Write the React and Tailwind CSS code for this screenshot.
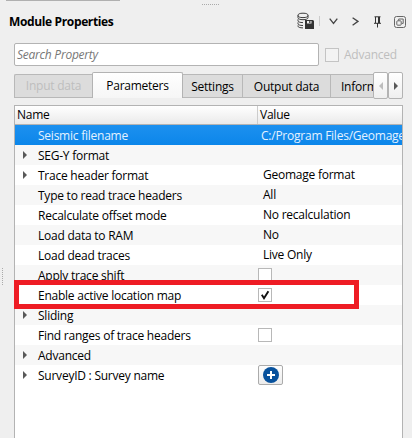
const TABS = [
  { label: 'Settings', className: 'w-[60px]', text: 'tracking-[-0.02em]' },
  { label: 'Output data', className: 'w-[88px]', text: 'tracking-[-0.02em]' },
  { label: 'Information', className: 'w-[55px] justify-start pl-[10px]', text: 'tracking-[-0.02em]' },
];

const ROWS = [
  { name: 'Seismic filename', value: 'C:/Program Files/Geomage', selected: true },
  { name: 'SEG-Y format', expandable: true },
  { name: 'Trace header format', value: 'Geomage format', expandable: true },
  { name: 'Type to read trace headers', value: 'All' },
  { name: 'Recalculate offset mode', value: 'No recalculation' },
  { name: 'Load data to RAM', value: 'No' },
  { name: 'Load dead traces', value: 'Live Only' },
  { name: 'Apply trace shift', checkbox: true },
  { name: 'Enable active location map', checkbox: true, checked: true },
  { name: 'Sliding', expandable: true },
  { name: 'Find ranges of trace headers', checkbox: true },
  { name: 'Advanced', expandable: true },
  { name: 'SurveyID : Survey name', expandable: true, add: true },
];

function DatabaseSaveIcon() {
  return (
    <svg width="18" height="18" viewBox="0 0 18 18" fill="none" stroke="#3c3c3c">
      <ellipse cx="6" cy="3.4" rx="5" ry="2.2" />
      <path d="M1 3.4v2.3c0 1.2 2 2 5 2s5-.8 5-2V3.4M1 7.3v1.5c0 1.1 2 1.8 5 1.8M1 10.4v1.4c0 1 2 1.7 5 1.7M1 13.4v.8c0 1 2 1.7 5 1.7" />
      <path d="M8 8h8l1 1v8H8z" fill="#333" stroke="none" />
      <path d="M10 9h4.5v2.5H10z" fill="#eee" stroke="none" />
      <path d="M12.2 9h1.2v2h-1.2z" fill="#333" stroke="none" />
    </svg>
  );
}

function PinIcon() {
  return (
    <svg width="9" height="12" viewBox="0 0 9 12" fill="none" stroke="#333">
      <path d="M1.5 .8h6M2.5 1v6M4.5 7v4.5M1 7.3h7" />
      <path d="M6 1v6" strokeWidth="2" />
    </svg>
  );
}

function FloatIcon() {
  return (
    <svg width="12" height="12" viewBox="0 0 12 12" fill="none" stroke="#666">
      <rect x=".5" y=".5" width="11" height="11" rx="2" />
      <path d="M4.7 4.5V3h4.5v4.4H7.8" />
      <rect x="2.8" y="4.8" width="4.4" height="4.4" rx=".8" />
    </svg>
  );
}

function Expander() {
  return (
    <svg width="4" height="8" viewBox="0 0 4 8" fill="#595959">
      <path d="M0 0l4 4-4 4z" />
    </svg>
  );
}

function Checkbox({ checked, faded }) {
  return (
    <span className={`block h-[14px] w-[14px] shrink-0 border ${faded ? 'border-[#c4c4c4] bg-[#f3f3f3]' : 'border-[#b8b8b8] bg-white'}`}>
      {checked && (
        <svg width="12" height="12" viewBox="0 0 12 12" fill="none" stroke="#111" strokeWidth="1.9">
          <path d="M2.8 5.8L5 9.2 9.4 2.2" />
        </svg>
      )}
    </span>
  );
}

function AddButton() {
  return (
    <span className="flex h-5 w-[25px] items-center justify-center rounded-[2px] border border-[#ababab] bg-gradient-to-b from-[#fdfdfd] to-[#ececec]">
      <svg width="16" height="16" viewBox="0 0 16 16">
        <circle cx="8" cy="8" r="8" fill="#07519c" />
        <path d="M8 4v8M4 8h8" stroke="#fff" strokeWidth="2" />
      </svg>
    </span>
  );
}

function Row({ row, index }) {
  const background = row.selected
    ? 'bg-gradient-to-b from-[#1c90ef] to-[#0b86ea] text-[#e4f2ff]'
    : index % 2 ? 'bg-[#f7f7f7]' : 'bg-white';
  return (
    <div className={`flex h-5 items-center ${background}`}>
      <div className="flex w-[243px] shrink-0 items-center">
        <span className="w-[23px] shrink-0 pl-2">{row.expandable && <Expander />}</span>
        <span className="pt-[2px]">{row.name}</span>
      </div>
      {row.value && <span className={row.selected ? 'pl-[3px] pt-[2px]' : 'pl-[5px]'}>{row.value}</span>}
      {row.checkbox && <Checkbox checked={row.checked} />}
      {row.add && <AddButton />}
    </div>
  );
}

export default function App() {
  return (
    <div className="relative flex h-[438px] w-[412px] flex-col overflow-hidden whitespace-nowrap bg-[#efefef] font-['Open_Sans','Noto_Sans',sans-serif] text-[12px] leading-[16px] tracking-[-0.02em] text-black">
      {/* edge of the panel above and the splitter handles */}
      <div className="absolute left-[6px] top-0 h-px w-[114px] bg-[#b0b0b0]" />
      <div className="absolute left-[202px] top-1 w-[17px] border-t border-dotted border-[#aaa]" />
      <div className="absolute left-[2px] top-[268px] h-[17px] border-l border-dotted border-[#aaa]" />

      <div className="flex h-[43px] shrink-0 items-start pl-[9px] pt-3">
        <h1 className="w-[288px] shrink-0 pt-[2px] font-bold tracking-[-0.03em]">Module Properties</h1>
        <DatabaseSaveIcon />
        <span className="ml-1 mt-1 h-[10px] w-px bg-[#ccc]" />
        <svg className="ml-[9px] mt-[6px]" width="9" height="7" viewBox="0 0 9 7" fill="none" stroke="#444" strokeWidth="1.3">
          <path d="M.7 .7l3.8 4.8L8.3 .7" />
        </svg>
        <svg className="ml-[14px] mt-[5px]" width="7" height="9" viewBox="0 0 7 9" fill="none" stroke="#444" strokeWidth="1.3">
          <path d="M.6 .7L6 4.4.6 8.2" />
        </svg>
        <span className="ml-[14px] mt-1"><PinIcon /></span>
        <span className="ml-[12px] mt-1"><FloatIcon /></span>
      </div>

      <div className="flex h-[23px] shrink-0 items-center pl-[14px]">
        <div className="h-[23px] w-[305px] rounded-[2px] border border-[#b3b3b3] bg-white pl-[2px] pt-[3px] italic text-[#777]">Search Property</div>
        <span className="ml-[6px]"><Checkbox faded /></span>
        <span className="pl-[5px] pt-px text-[#bebebe]">Advanced</span>
      </div>

      <div className="mt-[6px] flex h-[27px] shrink-0 items-start pl-[14px]">
        <div className="mt-[2px] flex h-6 w-[78px] items-center justify-center rounded-tl-[2px] border border-r-0 border-[#b8b8b8] bg-[#dcdcdc] text-[#bebebe]">Input data</div>
        <div className="flex h-[26px] w-[91px] items-center justify-center rounded-t-[2px] border border-b-0 border-[#b3b3b3] bg-gradient-to-b from-white to-[#f6f6f6]">Parameters</div>
        <div className="mt-[2px] flex w-[190px] overflow-hidden">
          {TABS.map(tab => (
            <div key={tab.label} className={`flex h-6 shrink-0 items-center justify-center border border-l-0 border-[#b8b8b8] bg-[#dcdcdc] pt-px ${tab.className}`}>
              <span className={tab.text}>{tab.label}</span>
            </div>
          ))}
        </div>
        <div className="flex h-[27px] w-[15px] shrink-0 items-center justify-center rounded-[2px] border border-[#b3b3b3] bg-gradient-to-b from-white to-[#efefef]">
          <svg width="4" height="8" viewBox="0 0 4 8" fill="#bdbdbd"><path d="M4 0L0 4l4 4z" /></svg>
        </div>
        <div className="flex h-[27px] w-[15px] shrink-0 items-center justify-center rounded-[2px] border border-[#b3b3b3] bg-gradient-to-b from-white to-[#efefef]">
          <Expander />
        </div>
      </div>

      <div className="ml-[14px] mt-[6px] flex w-[389px] flex-1 flex-col overflow-hidden border border-b-0 border-[#b3b3b3] bg-white">
        <div className="flex h-[19px] shrink-0 border-b border-[#b3b3b3] bg-gradient-to-b from-white to-[#eaeaea]">
          <div className="w-[243px] border-r border-[#ccc] pl-[2px] pt-px">Name</div>
          <div className="pl-[2px] pt-px">Value</div>
        </div>
        {ROWS.map((row, index) => <Row key={row.name} row={row} index={index} />)}
      </div>

      {/* highlight around the active location option */}
      <div className="absolute left-[14px] top-[280px] h-[29px] w-[345px] border-[5px] border-[#ee1c24]" />
    </div>
  );
}
